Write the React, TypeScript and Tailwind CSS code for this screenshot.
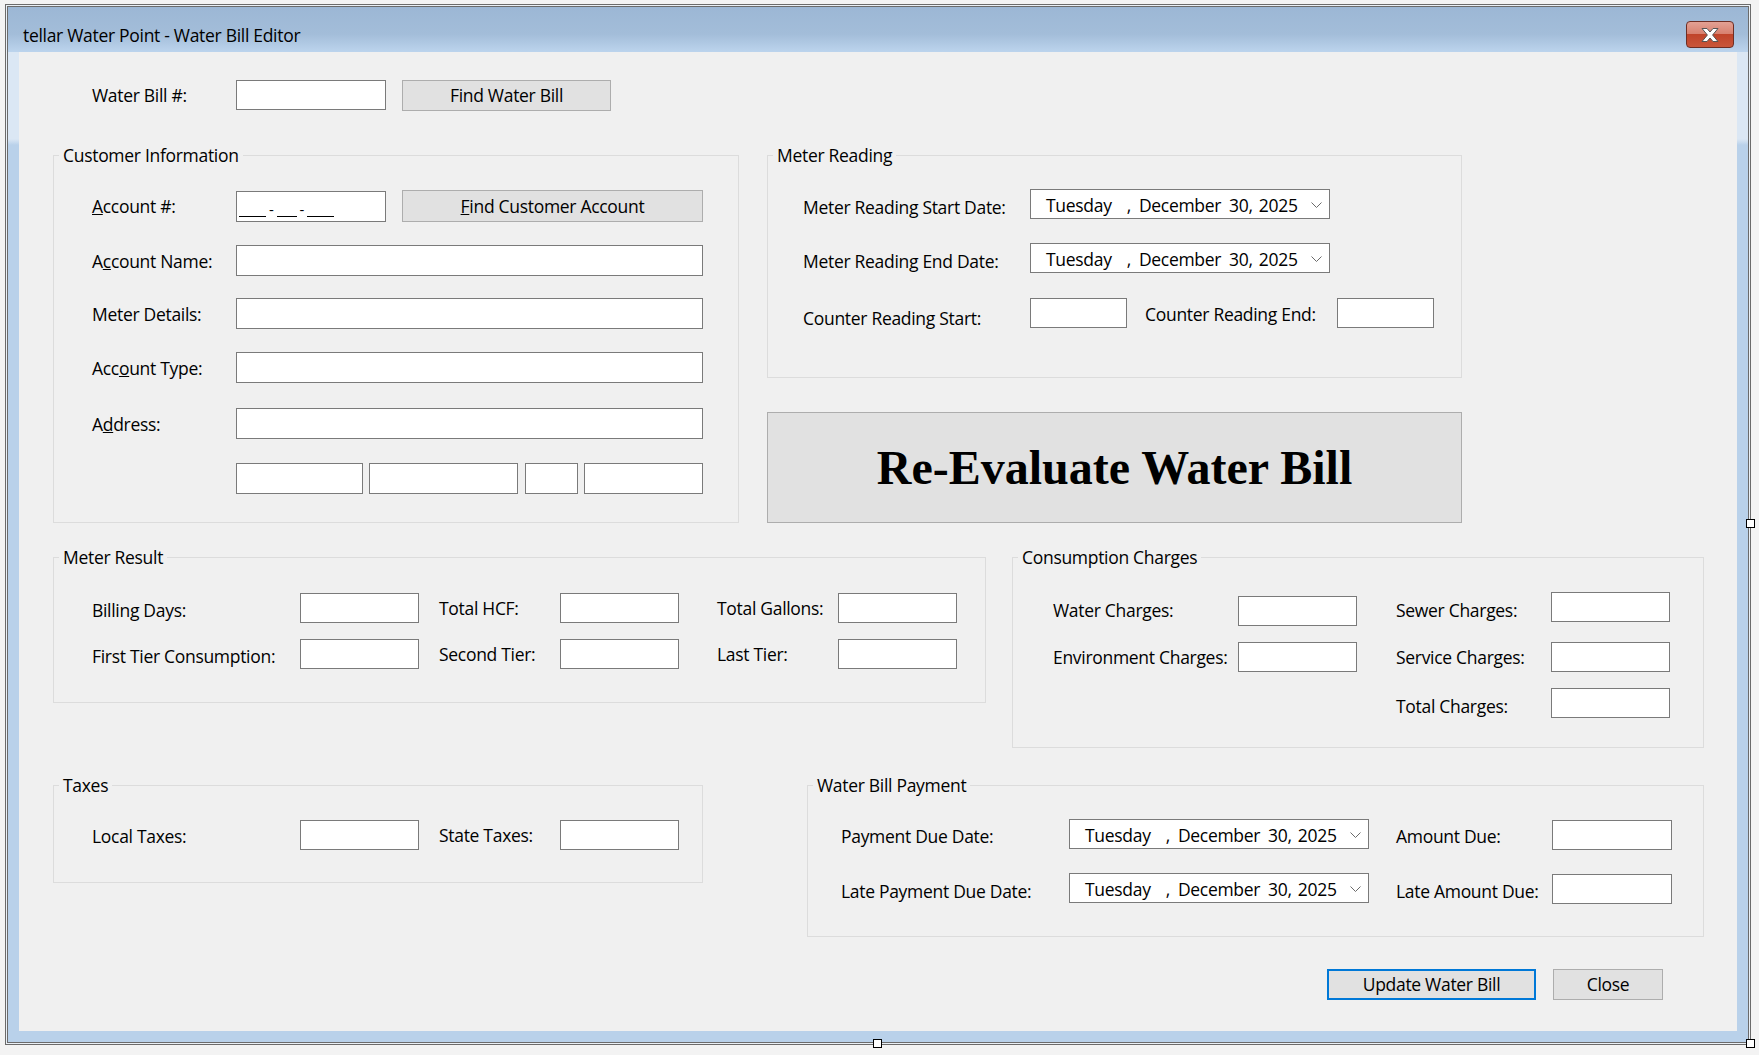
import type * as React from 'react';

// Water Bill Editor — WinForms designer look-alike.

interface BoxProps {
  readonly w: string;
  readonly h?: string;
  readonly className?: string;
}

function TextBox({ w, h = 'h-[30px]', className = '' }: BoxProps): React.ReactElement {
  return <div className={`shrink-0 border border-[#7a7a7a] bg-white ${w} ${h} ${className}`} />;
}

function Btn({ w, h = 'h-[31px]', className = '', children }: BoxProps & { children: React.ReactNode }): React.ReactElement {
  return (
    <div className={`flex shrink-0 items-center justify-center border border-[#adadad] bg-[#e1e1e1] ${w} ${h} ${className}`}>
      {children}
    </div>
  );
}

function Label({ w, className = '', children }: { w: string; className?: string; children: React.ReactNode }): React.ReactElement {
  return <span className={`shrink-0 whitespace-nowrap leading-[24px] ${w} ${className}`}>{children}</span>;
}

function DatePicker({ className = '' }: { className?: string }): React.ReactElement {
  return (
    <div className={`flex h-[30px] w-[300px] shrink-0 items-center border border-[#7a7a7a] bg-white pl-[15px] pt-[2px] leading-[24px] ${className}`}>
      <span>Tuesday</span>
      <span className="ml-[15px]">,</span>
      <span className="ml-[8px]">December</span>
      <span className="ml-[8px]">30,</span>
      <span className="ml-[6px]">2025</span>
      <svg className="ml-auto mr-[7px]" width="11" height="7" viewBox="0 0 11 7" fill="none">
        <polyline points="0.5,0.5 5.5,5.5 10.5,0.5" stroke="#6a6a6a" strokeWidth="1" />
      </svg>
    </div>
  );
}

function Group({ title, className, children }: { title: string; className: string; children: React.ReactNode }): React.ReactElement {
  return (
    <div className={`relative shrink-0 border border-[#dcdcdc] ${className}`}>
      <span className="absolute -top-[12px] left-[5px] bg-[#f0f0f0] px-[4px] leading-[22px]">{title}</span>
      {children}
    </div>
  );
}

const Handle = ({ className }: { className: string }): React.ReactElement => (
  <div className={`absolute h-[9px] w-[9px] border border-black bg-white ${className}`} />
);

export default function App(): React.ReactElement {
  return (
    <div className="relative h-[1055px] w-[1759px] overflow-hidden bg-[#f3f3f3] font-['Open_Sans',sans-serif] text-[17.5px] tracking-[-0.3px] text-black">
      <div className="ml-[5px] mt-[4px] h-[1041px] w-[1746px] border border-[#6b6b6b] bg-[#eaf0f6] p-px">
        <div className="flex h-full w-full flex-col border border-[#6b6b6b] bg-[linear-gradient(to_bottom,#dbe7f4_0px,#dbe7f4_132px,#b9d1ea_138px)]">
          {/* title bar */}
          <div className="flex h-[45px] shrink-0 items-start bg-[linear-gradient(to_bottom,#9cb7d5_0%,#a3bdd9_60%,#bcd4ed_100%)]">
            <span className="ml-[15px] mt-[16px] leading-[24px]">tellar Water Point - Water Bill Editor</span>
            <div className="ml-auto mr-[14px] mt-[14px] flex h-[27px] w-[48px] items-center justify-center rounded-[4px] border border-[#6e2e24] bg-[linear-gradient(to_bottom,#e3a194_0%,#d8816f_47%,#c0442a_50%,#c9563b_100%)]">
              <svg width="22" height="16" viewBox="0 0 22 16">
                <polygon
                  points="3,1.5 8,1.5 11,5 14,1.5 19,1.5 13.6,8 19,14.5 14,14.5 11,11 8,14.5 3,14.5 8.4,8"
                  fill="#ffffff"
                  stroke="#555555"
                  strokeWidth="1"
                  strokeLinejoin="round"
                />
              </svg>
            </div>
          </div>

          {/* client area */}
          <div className="mx-[11px] flex h-[979px] w-[1718px] shrink-0 flex-col bg-[#f0f0f0]">
            {/* water bill # */}
            <div className="mt-[27px] flex h-[32px] items-center pl-[73px]">
              <Label w="w-[144px]">Water Bill #:</Label>
              <TextBox w="w-[150px]" />
              <Btn w="w-[209px]" className="ml-[16px]">Find Water Bill</Btn>
            </div>

            {/* customer + meter reading */}
            <div className="mt-[44px] flex items-start pl-[34px]">
              <Group title="Customer Information" className="h-[368px] w-[686px] pl-[38px] pt-[34px]">
                <div className="flex h-[32px] items-center">
                  <Label w="w-[144px]"><u>A</u>ccount #:</Label>
                  <div className="flex h-[31px] w-[150px] shrink-0 items-end border border-[#7a7a7a] bg-white pb-[4px] pl-[2px] text-[15px] leading-[16px]">
                    <span className="h-[14px] w-[27px] border-b border-black" />
                    <span className="mx-[3px]">-</span>
                    <span className="h-[14px] w-[20px] border-b border-black" />
                    <span className="mx-[3px]">-</span>
                    <span className="h-[14px] w-[27px] border-b border-black" />
                  </div>
                  <Btn w="w-[301px]" h="h-[32px]" className="ml-[16px]"><span><u>F</u>ind Customer Account</span></Btn>
                </div>
                <div className="mt-[23px] flex h-[31px] items-center">
                  <Label w="w-[144px]">A<u>c</u>count Name:</Label>
                  <TextBox w="w-[467px]" h="h-[31px]" />
                </div>
                <div className="mt-[22px] flex h-[31px] items-center">
                  <Label w="w-[144px]">Meter Details:</Label>
                  <TextBox w="w-[467px]" h="h-[31px]" />
                </div>
                <div className="mt-[23px] flex h-[31px] items-center">
                  <Label w="w-[144px]">Acc<u>o</u>unt Type:</Label>
                  <TextBox w="w-[467px]" h="h-[31px]" />
                </div>
                <div className="mt-[25px] flex h-[31px] items-center">
                  <Label w="w-[144px]">A<u>d</u>dress:</Label>
                  <TextBox w="w-[467px]" h="h-[31px]" />
                </div>
                <div className="mt-[24px] flex h-[31px] items-center pl-[144px]">
                  <TextBox w="w-[127px]" h="h-[31px]" />
                  <TextBox w="w-[149px]" h="h-[31px]" className="ml-[6px]" />
                  <TextBox w="w-[53px]" h="h-[31px]" className="ml-[7px]" />
                  <TextBox w="w-[119px]" h="h-[31px]" className="ml-[6px]" />
                </div>
              </Group>

              <div className="ml-[28px] flex w-[695px] shrink-0 flex-col">
                <Group title="Meter Reading" className="h-[223px] w-[695px] pl-[35px] pt-[33px]">
                  <div className="flex h-[30px] items-center">
                    <Label w="w-[227px]" className="mt-[6px]">Meter Reading Start Date:</Label>
                    <DatePicker className="w-[299px]" />
                  </div>
                  <div className="mt-[24px] flex h-[30px] items-center">
                    <Label w="w-[227px]" className="mt-[6px]">Meter Reading End Date:</Label>
                    <DatePicker className="w-[299px]" />
                  </div>
                  <div className="mt-[25px] flex h-[30px] items-center">
                    <Label w="w-[227px]" className="mt-[10px]">Counter Reading Start:</Label>
                    <TextBox w="w-[97px]" />
                    <Label w="w-[192px]" className="ml-[18px] mt-[2px]">Counter Reading End:</Label>
                    <TextBox w="w-[97px]" />
                  </div>
                </Group>
                <div className="mt-[34px] flex h-[111px] w-[695px] items-center justify-center border border-[#adadad] bg-[#e1e1e1] font-['Liberation_Serif','Times_New_Roman',serif] text-[48px] font-bold leading-none tracking-normal">
                  Re-Evaluate Water Bill
                </div>
              </div>
            </div>

            {/* meter result + consumption charges */}
            <div className="mt-[34px] flex items-start pl-[34px]">
              <Group title="Meter Result" className="h-[146px] w-[933px] pl-[38px] pt-[35px]">
                <div className="flex h-[30px] items-center">
                  <Label w="w-[208px]" className="mt-[4px]">Billing Days:</Label>
                  <TextBox w="w-[119px]" />
                  <Label w="w-[121px]" className="ml-[20px]">Total HCF:</Label>
                  <TextBox w="w-[119px]" />
                  <Label w="w-[121px]" className="ml-[38px]">Total Gallons:</Label>
                  <TextBox w="w-[119px]" />
                </div>
                <div className="mt-[16px] flex h-[30px] items-center">
                  <Label w="w-[208px]" className="mt-[4px]">First Tier Consumption:</Label>
                  <TextBox w="w-[119px]" />
                  <Label w="w-[121px]" className="ml-[20px]">Second Tier:</Label>
                  <TextBox w="w-[119px]" />
                  <Label w="w-[121px]" className="ml-[38px]">Last Tier:</Label>
                  <TextBox w="w-[119px]" />
                </div>
              </Group>

              <Group title="Consumption Charges" className="ml-[26px] h-[191px] w-[692px] pl-[40px] pt-[34px]">
                <div className="flex h-[34px] items-center">
                  <Label w="w-[185px]" className="mt-[2px]">Water Charges:</Label>
                  <TextBox w="w-[119px]" className="self-end" />
                  <Label w="w-[155px]" className="ml-[39px] mt-[2px]">Sewer Charges:</Label>
                  <TextBox w="w-[119px]" className="self-start" />
                </div>
                <div className="mt-[16px] flex h-[30px] items-center">
                  <Label w="w-[185px]">Environment Charges:</Label>
                  <TextBox w="w-[119px]" />
                  <Label w="w-[155px]" className="ml-[39px]">Service Charges:</Label>
                  <TextBox w="w-[119px]" />
                </div>
                <div className="mt-[16px] flex h-[30px] items-center pl-[343px]">
                  <Label w="w-[155px]" className="mt-[6px]">Total Charges:</Label>
                  <TextBox w="w-[119px]" />
                </div>
              </Group>
            </div>

            {/* taxes + payment */}
            <div className="mt-[37px] flex items-start pl-[34px]">
              <Group title="Taxes" className="h-[98px] w-[650px] pl-[38px] pt-[34px]">
                <div className="flex h-[30px] items-center">
                  <Label w="w-[208px]" className="mt-[2px]">Local Taxes:</Label>
                  <TextBox w="w-[119px]" />
                  <Label w="w-[121px]" className="ml-[20px]">State Taxes:</Label>
                  <TextBox w="w-[119px]" />
                </div>
              </Group>

              <Group title="Water Bill Payment" className="ml-[104px] h-[152px] w-[897px] pl-[33px] pt-[33px]">
                <div className="flex h-[31px] items-center">
                  <Label w="w-[228px]" className="mt-[3px]">Payment Due Date:</Label>
                  <DatePicker className="self-start" />
                  <Label w="w-[156px]" className="ml-[27px] mt-[3px]">Amount Due:</Label>
                  <TextBox w="w-[120px]" className="self-end" />
                </div>
                <div className="mt-[23px] flex h-[31px] items-center">
                  <Label w="w-[228px]" className="mt-[4px]">Late Payment Due Date:</Label>
                  <DatePicker className="self-start" />
                  <Label w="w-[156px]" className="ml-[27px] mt-[4px]">Late Amount Due:</Label>
                  <TextBox w="w-[120px]" className="self-end" />
                </div>
              </Group>
            </div>

            {/* dialog buttons */}
            <div className="mt-[32px] flex justify-end pr-[74px]">
              <div className="flex h-[31px] w-[209px] shrink-0 items-center justify-center border-2 border-[#0078d7] bg-[#e1e1e1]">
                Update Water Bill
              </div>
              <Btn w="w-[110px]" className="ml-[17px]">Close</Btn>
            </div>
          </div>
        </div>
      </div>

      <Handle className="left-[1746px] top-[519px]" />
      <Handle className="left-[873px] top-[1039px]" />
      <Handle className="left-[1746px] top-[1039px]" />
    </div>
  );
}
